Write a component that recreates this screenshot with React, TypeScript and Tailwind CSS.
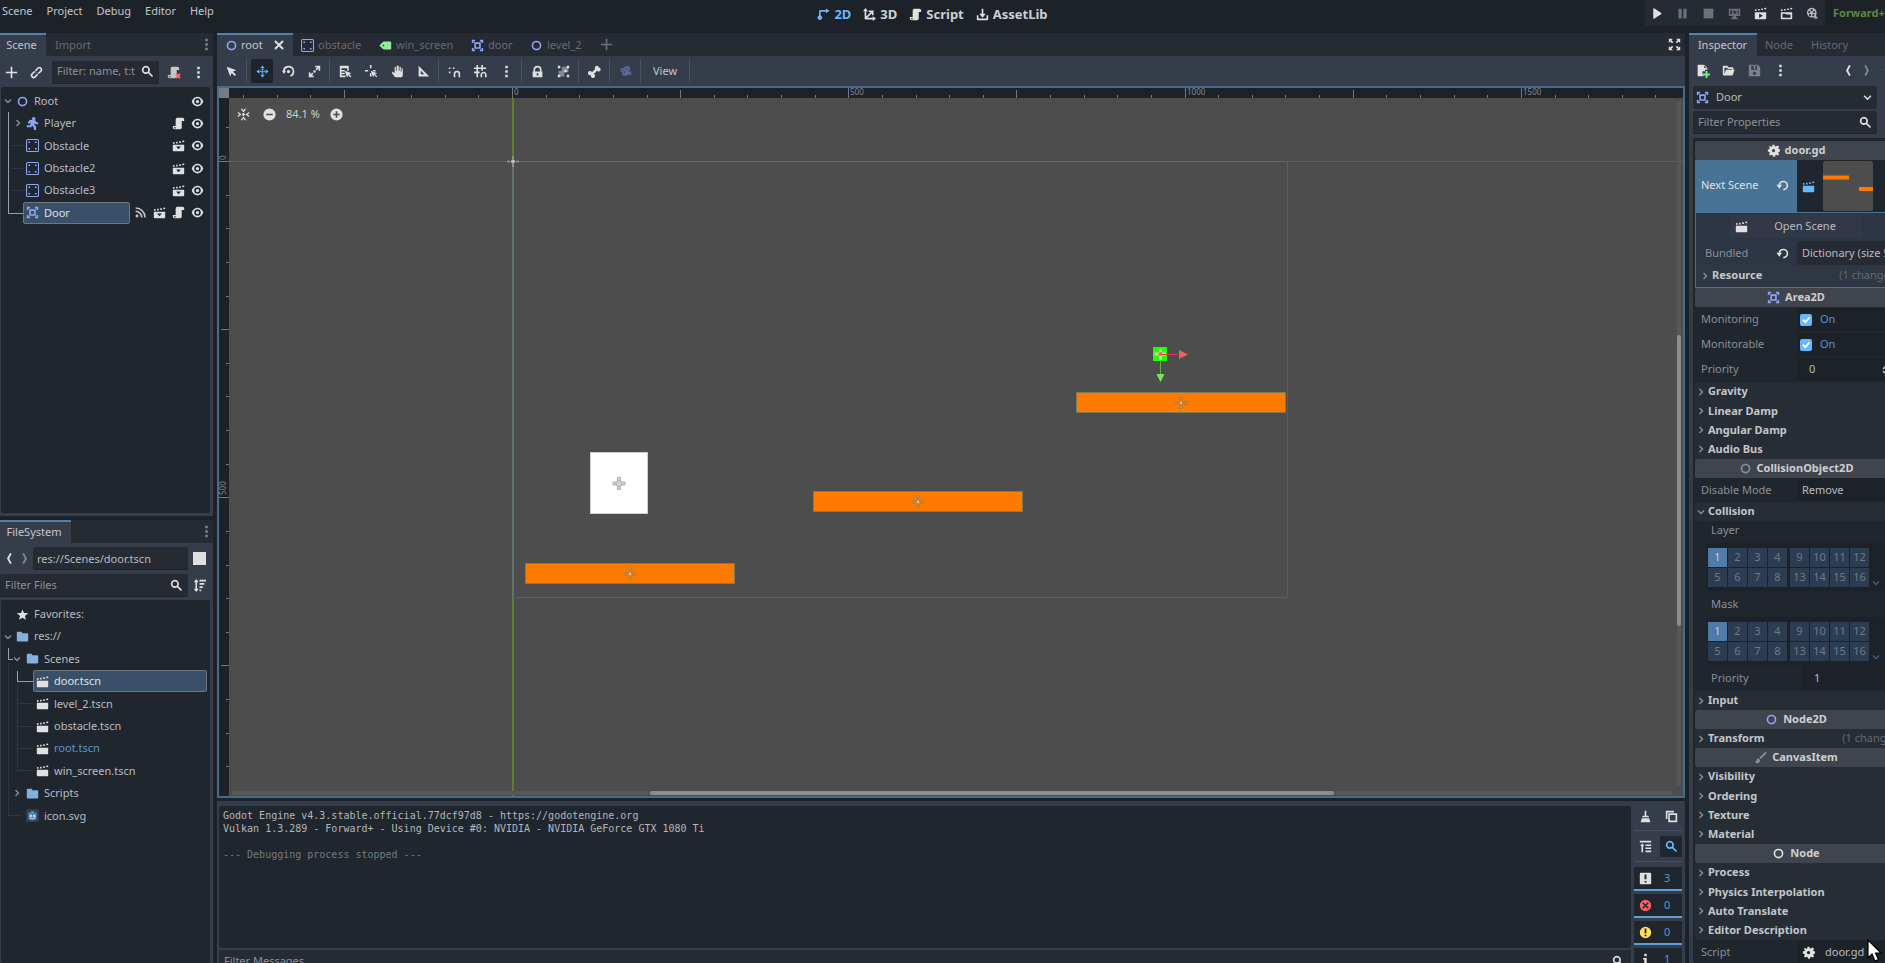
import React from "react";

/* ---------- icons (16-unit grid) ---------- */

const P = {
  node: "M8 2a6 6 0 0 0 0 12A6 6 0 0 0 8 2zm0 2a4 4 0 0 1 0 8 4 4 0 0 1 0-8z",
  area: "M1 1v4h2V3h2V1zm10 0v2h2v2h2V1zM4 4v8h8V4zm2 2h4v4H6zm-5 5v4h4v-2H3v-2zm12 0v2h-2v2h4v-4z",
  body: "M2 0a2 2 0 0 0-2 2v12a2 2 0 0 0 2 2h12a2 2 0 0 0 2-2V2a2 2 0 0 0-2-2zm0 1.3h12a.7.7 0 0 1 .7.7v12a.7.7 0 0 1-.7.7H2a.7.7 0 0 1-.7-.7V2a.7.7 0 0 1 .7-.7zM3 3v2h2V3zm8 0v2h2V3zM3 11v2h2v-2zm8 0v2h2v-2z",
  player:
    "M9.500 0a2.200 2.200 0 1 0 0 4.400 2.200 2.200 0 0 0 0-4.400zM4.500 3.500 2 7.500l2 1.200L5.800 6 5 10.200H1v2.400h5.500l1-1.800 2.200 2V16H12.400v-4.200L10.300 9.500l.4-2L11.500 9H15V6.600h-2l-1.300-2.300z",
  clap: "M1 7v7a1 1 0 0 0 1 1h12a1 1 0 0 0 1-1V7zM1 4l.3 1.800h2L3 3.700zm3.900-.6.3 2h2l-.4-2zm3.800-.6.4 2h2l-.4-2zm3.800-.7.4 2 2.100-.3V1.800z",
  clapInst:
    "M1 7v7a1 1 0 0 0 1 1h12a1 1 0 0 0 1-1V7zm4 2.200h6L8 12.500zM1 4l.3 1.800h2L3 3.700zm3.900-.6.3 2h2l-.4-2zm3.800-.6.4 2h2l-.4-2zm3.800-.7.4 2 2.100-.3V1.800z",
  clapPlay:
    "M1 6.500V14a1 1 0 0 0 1 1h12a1 1 0 0 0 1-1V6.500zM6.300 8l4.700 2.800-4.700 2.700zM1 3l.3 1.800h2L3 2.700zm3.900-.6.3 2h2l-.4-2zm3.800-.6.4 2h2l-.4-2zm3.800-.7.4 2 2.100-.3V.8z",
  clapFolder:
    "M1 6.500V14a1 1 0 0 0 1 1h12a1 1 0 0 0 1-1V6.500zm2 1.800h4l1 1h5v4H3zM1 3l.3 1.800h2L3 2.700zm3.900-.6.3 2h2l-.4-2zm3.800-.6.4 2h2l-.4-2zm3.800-.7.4 2 2.100-.3V.8z",
  script:
    "M6 1a3 3 0 0 0-1.500 2.500V11H1v2a2 2 0 0 0 2 2h7a2 2 0 0 0 2-2V5h3V3a2 2 0 0 0-2-2zM2.500 12.500h2V14H3z",
  eye: "M8 2C5.400 2 2.200 3.900 1 7.700a1 1 0 0 0 0 .6C2.200 12.200 5.500 14 8 14s5.800-1.800 7-5.700a1 1 0 0 0 0-.6C13.900 3.900 10.600 2 8 2zm0 2a4 4 0 0 1 0 8 4 4 0 0 1 0-8zm0 2a2 2 0 0 0 0 4 2 2 0 0 0 0-4z",
  folder: "M1 3a1 1 0 0 1 1-1h4.500a1 1 0 0 1 1 1v1H14a1 1 0 0 1 1 1v8a1 1 0 0 1-1 1H2a1 1 0 0 1-1-1z",
  star: "M8 1.700 6.200 6 1 6.300l4 3.400L3.700 14.500 8 12l4.300 2.500L11 9.700l4-3.400L9.800 6z",
  plus: "M7 1v6H1v2h6v6h2V9h6V7H9V1z",
  search: "M6 1a5 5 0 1 0 2.700 9.200l4.100 4.100a1 1 0 0 0 1.500-1.500L10.200 8.700A5 5 0 0 0 6 1zm0 2a3 3 0 1 1 0 6 3 3 0 0 1 0-6z",
  dots: "M6.500 1h3v3h-3zM6.500 6.500h3v3h-3zM6.500 12h3v3h-3z",
  select: "M2 2l4.500 12 1.600-4.300L12 13.600 13.600 12 9.700 8.100 14 6.500z",
  move: "M8 .5 5.200 4h5.600zM.5 8 4 10.800V5.200zM15.500 8 12 5.200v5.600zM8 15.500l2.800-3.500H5.200zM8 6.500a1.500 1.500 0 1 0 0 3 1.500 1.500 0 0 0 0-3zM7 4.500h2v1.500H7zm0 5.500h2v1.500H7zM4.500 7H6v2H4.500zM10 7h1.500v2H10z",
  rotate: "M8 1a7 7 0 0 0-6.900 6H0l2.500 4L5 7H3.200a5 5 0 1 1 6.800 5.600l.7 1.900A7 7 0 0 0 8 1zm0 5a2 2 0 1 0 0 4 2 2 0 0 0 0-4z",
  scale: "M9 1v2h2.600L9.300 5.300l1.400 1.400L13 4.400V7h2V1zM8 6.500A1.500 1.500 0 1 0 8 9.500 1.500 1.500 0 0 0 8 6.500zM1 9v6h6v-2H4.400l2.300-2.300-1.400-1.400L3 11.600V9z",
  list: "M1 1v14h7v-2H3v-1.500h4v-2H3V8h4V6H3V4h7v3h2V1zM7 7l3 8.500 1.200-3 2.600 2.700 1.400-1.400-2.700-2.600 3-1.200z",
  pivot: "M6 0h2v4H6zM0 6h4v2H0zM10 6h3v2h-3zM6 10h2v4H6zM7 7l3 8 1.200-2.800L14 15l1-1-2.800-2.800L15 10z",
  hand: "M7 1v6H6V2.500H4.500V10L2.300 8 1 9.500 5 15h8a2 2 0 0 0 1.500-2V4H13v4h-1V2h-1.500v5h-1V1z",
  ruler: "M2 1v13h13zm2.700 6 4.300 4.300H4.700z",
  smart: "M1 3h2v2H1zM1 8h2v2H1zM6 3h2v2H6zM7 15v-4a4 4 0 0 1 8 0v4h-2v-4a2 2 0 0 0-4 0v4z",
  grid: "M3 0v3H0v2h3v3H0v2h3v5h2v-5h2V8H5V5h4v2h2V5h4V3h-4V0H9v3H5V0zm5 15v-3.500a3.800 3.800 0 0 1 7.500 0V15h-2v-3.500a1.800 1.800 0 0 0-3.500 0V15z",
  lock: "M8 1a5 5 0 0 0-5 5v2H2v7h12V8h-1V6a5 5 0 0 0-5-5zm0 2a3 3 0 0 1 3 3v2H5V6a3 3 0 0 1 3-3zM7 10h2v3H7z",
  bone: "M11 1a2.500 2.500 0 0 0-2.200 3.800L4.900 8.800A2.600 2.600 0 1 0 3.700 12.300 2.600 2.600 0 1 0 7.200 11.100l4-3.900A2.500 2.500 0 1 0 13.400 3 2.500 2.500 0 0 0 11 1z",
  cam: "M9 1.500a3 3 0 0 0-3 2.700A2.700 2.700 0 1 0 4 9v3a1 1 0 0 0 1 1h5a1 1 0 0 0 1-1v-1l4 2V7.500L12 9a1 1 0 0 0-.3-1.500A3 3 0 0 0 9 1.500zM6 8h1.500v1.500H6zM8.500 4H10v1.500H8.500zM3 6h1.300v1.300H3z",
  expand: "M1 1v5l1.800-1.800L5 6.500 6.500 5 4.200 2.800 6 1zM10 1l1.800 1.800L9.500 5 11 6.500l2.200-2.300L15 6V1zM5 9.500l-2.200 2.300L1 10v5h5l-1.800-1.800L6.500 11zM11 9.500 9.500 11l2.300 2.200L10 15h5v-5l-1.800 1.800z",
  gear: "M6.800 1 6.300 3a5 5 0 0 0-1.100.5L3.400 2.400 2.400 3.400l1.100 1.800A5 5 0 0 0 3 6.300L1 6.800v2.400l2 .5a5 5 0 0 0 .5 1.100l-1.100 1.800 1.700 1.700 1.800-1.100a5 5 0 0 0 1 .5l.5 2h2.400l.5-2a5 5 0 0 0 1.100-.5l1.800 1.100 1.700-1.700-1.100-1.800a5 5 0 0 0 .5-1.100l2-.5V6.800l-2-.5a5 5 0 0 0-.5-1.100l1.100-1.800-1.700-1.700-1.800 1.100A5 5 0 0 0 9.700 3l-.5-2zM8 6a2 2 0 1 1 0 4 2 2 0 0 1 0-4z",
  reload: "M9 2A6 6 0 0 0 3.100 7H.5L4 12l3.500-5H5.100A4 4 0 1 1 9 12v2A6 6 0 0 0 9 2z",
  canvas: "M14.500 1a1.500 1.500 0 0 0-1 .4L6.800 8l1.700 1.700 6.600-6.700A1.500 1.500 0 0 0 14.500 1zM5.800 9A2.800 2.800 0 0 0 3 11.800C3 13 2 14 1 14.500c2.500 1 6.500.5 6.500-3z",
  play: "M4 2.500a1 1 0 0 1 1.500-.8l8 5.500a1 1 0 0 1 0 1.600l-8 5.500A1 1 0 0 1 4 13.500z",
  pause: "M3 2h4v12H3zM9 2h4v12H9z",
  stop: "M2 2h12v12H2z",
  remote: "M1 2v9h5v2H4v2h8v-2h-2v-2h5V2zm2 2h2v5H3zm4 0 4 2.500L7 9zm5 0h1v5h-1z",
  reel: "M7 1a6 6 0 1 0 3 11.300V14h4v-2h-1.500V9.500A6 6 0 0 0 7 1zm0 1.500A1.400 1.400 0 1 1 7 5.300 1.400 1.400 0 0 1 7 2.500zM4 5a1.300 1.300 0 1 1 0 2.600A1.300 1.300 0 0 1 4 5zm6 0a1.300 1.300 0 1 1 0 2.600A1.300 1.300 0 0 1 10 5zM5 8.700a1.300 1.300 0 1 1 0 2.600 1.300 1.300 0 0 1 0-2.600zm4 0a1.300 1.300 0 1 1 0 2.600 1.300 1.300 0 0 1 0-2.600z",
  d2: "M11 .5v2H4a1.500 1.500 0 0 0-1.500 1.500v5.300a2.800 2.800 0 1 0 2 0V4.500H11v2l4.500-3z",
  d3: "M3 0 0 4h2v9a1 1 0 0 0 1 1h9v2l4-3-4-3v2H5.400L11 6.400V9h2V3H7v2h2.600L4 10.600V4h2z",
  asset: "M7 1v6H4l4 5 4-5H9V1zM1 9v5a1 1 0 0 0 1 1h12a1 1 0 0 0 1-1V9h-2v4H3V9z",
  tag: "M6 3a1 1 0 0 0-.7.300L1 7.500a.8.800 0 0 0 0 1.100l4.300 4.100A1 1 0 0 0 6 13h8a1 1 0 0 0 1-1V4a1 1 0 0 0-1-1zM5.500 7a1 1 0 1 1 0 2 1 1 0 0 1 0-2z",
  openFolder: "M2 2a1 1 0 0 0-1 1v10a1 1 0 0 0 1 1h11l2.500-7H14V5a1 1 0 0 0-1-1H8L6.500 2zm1 2.500h3L7.500 6H12v1H5L3 12z",
  save: "M1 1v14h14V4l-3-3zm3 1h3v4h2V2h2v5H4zm4 7.500a2 2 0 1 1 0 4 2 2 0 0 1 0-4z",
  newFile: "M2 1v14h7v-2h-1v-4h3V7h3V6L9 1zm8 0v4h4z",
  broom: "M7 1v6H5a1 1 0 0 0-1 1v1h8V8a1 1 0 0 0-1-1H9V1zM3.500 10 2 15h12l-1.500-5z",
  copy: "M1 1v10h2V3h8V1zM4 4v11h11V4zm2 2h7v7H6z",
  collapse: "M1 1h14v2H1zM4 4 1.500 7.500H3V15h2V7.500h1.500zM8 5.500h7v1.800H8zM8 9.300h7v1.800H8zM8 13h7v2H8z",
  alert: "M2 1a1 1 0 0 0-1 1v12a1 1 0 0 0 1 1h12a1 1 0 0 0 1-1V2a1 1 0 0 0-1-1zm4.800 2h2.400v6H6.800zm0 8h2.400v2H6.800z",
  err: "M8 1a7 7 0 1 0 0 14A7 7 0 0 0 8 1zM5.200 4 8 6.800 10.800 4 12 5.200 9.200 8l2.800 2.800-1.200 1.200L8 9.200 5.200 12 4 10.800 6.800 8 4 5.200z",
  warn: "M8 1a7 7 0 1 0 0 14A7 7 0 0 0 8 1zM6.900 3h2.200v6H6.900zm0 7.500h2.200v2.200H6.900z",
  info: "M6.500 1h3v3h-3zM5 6h4.500v7H11v2H5v-2h1.500V8H5z",
  sort: "M4 0 1 4h2v8H1l3 4 3-4H5V4h2zM8 1h8v2H8zM8 5h6v2H8zM8 9h4v2H8zM8 13h2v2H8z",
  center:
    "M8 6.300a1.700 1.700 0 1 0 0 3.400 1.700 1.700 0 0 0 0-3.400zM4.500 1h2L8 3l1.500-2h2L8 5.500zM4.500 15h2L8 13l1.500 2h2L8 10.500zM1 4.500v2L3 8 1 9.500v2L5.500 8zM15 4.500v2L13 8l2 1.500v2L10.500 8z",
  minusC: "M8 .5a7.500 7.500 0 1 0 0 15 7.500 7.500 0 0 0 0-15zM4 7h8v2H4z",
  plusC: "M8 .5a7.500 7.500 0 1 0 0 15 7.500 7.500 0 0 0 0-15zM7 4h2v3h3v2H9v3H7V9H4V7h3z",
  link: "M11.500 1a3.500 3.500 0 0 0-2.500 1L7 4a3.500 3.500 0 0 0-.9 3.300l1.900-.8a1.500 1.500 0 0 1 .4-1.100l2-2a1.500 1.500 0 0 1 2.200 2.200l-2 2a1.500 1.500 0 0 1-1.100.4l-.8 1.900A3.500 3.500 0 0 0 12 9l2-2A3.500 3.500 0 0 0 11.500 1zM4 7 2 9a3.500 3.500 0 1 0 5 5l2-2a3.500 3.500 0 0 0 .9-3.300L8 9.500a1.500 1.500 0 0 1-.4 1.100l-2 2a1.500 1.500 0 0 1-2.200-2.200l2-2A1.500 1.500 0 0 1 6.500 8l.8-1.900A3.500 3.500 0 0 0 4 7z",
  signal: "M2 1.500v2A10.500 10.500 0 0 1 12.500 14h2A12.500 12.500 0 0 0 2 1.500zm0 4v2A6.500 6.500 0 0 1 8.500 14h2A8.500 8.500 0 0 0 2 5.500zM3.700 10.500a1.700 1.700 0 1 0 0 3.500 1.700 1.700 0 0 0 0-3.500z",
  check: "M3 8.500l1.800-1.800L7 8.900l4.700-5.200L13.500 5.300 7 12.500z",
};

type IconName = keyof typeof P;

function Icon({ n, c = "text-[#e0e0e0]", s = "size-[13px]" }: { n: IconName; c?: string; s?: string }) {
  return (
    <svg viewBox="0 0 16 16" className={`${s} ${c} shrink-0`} fill="currentColor" fillRule="evenodd" aria-hidden="true">
      <path d={P[n]} />
    </svg>
  );
}

function Chevron({ dir, c = "text-[#8b8f95]", s = "size-2" }: { dir: "down" | "right" | "left"; c?: string; s?: string }) {
  const d = dir === "down" ? "M1 2.500 4 5.500 7 2.500" : dir === "right" ? "M2.500 1 5.500 4 2.500 7" : "M5.500 1 2.500 4 5.500 7";
  return (
    <svg viewBox="0 0 8 8" className={`${s} ${c} shrink-0`} fill="none" stroke="currentColor" strokeWidth="1.400" aria-hidden="true">
      <path d={d} />
    </svg>
  );
}

function Nav({ dir, c }: { dir: "left" | "right"; c: string }) {
  return (
    <svg viewBox="0 0 8 14" className={`h-[13px] w-2 shrink-0 ${c}`} fill="none" stroke="currentColor" strokeWidth="2" aria-hidden="true">
      <path d={dir === "left" ? "M6 1.500 3 7l3 5.500" : "M2 1.500 5 7l-3 5.500"} />
    </svg>
  );
}

function Tool({ n, label, active, c }: { n: IconName; label: string; active?: boolean; c?: string }) {
  return (
    <button
      aria-label={label}
      className={`flex h-6 w-[22px] shrink-0 items-center justify-center rounded-xs ${active ? "bg-[#1f242c]" : ""}`}
    >
      <Icon n={n} c={active ? "text-[#69b7ff]" : c} />
    </button>
  );
}

const Sep = () => <div className="h-6 w-px shrink-0 bg-[#4a505c]" />;

/* ---------- top bar ---------- */

function TopBar() {
  return (
    <header className="flex h-[33px] shrink-0 items-start justify-between">
      <nav className="flex w-[560px] gap-[14px] pt-[2px] pl-[2px] leading-[18px] text-[#c3c6ca]">
        {["Scene", "Project", "Debug", "Editor", "Help"].map((m) => (
          <button key={m}>{m}</button>
        ))}
      </nav>
      <div className="flex gap-3 pt-1 text-[13px] leading-5 font-bold text-[#cdcfd2]">
        <button className="flex items-center gap-1 text-[#69b7ff]">
          <Icon n="d2" c="text-[#69b7ff]" />
          2D
        </button>
        <button className="flex items-center gap-1">
          <Icon n="d3" />
          3D
        </button>
        <button className="flex items-center gap-1">
          <Icon n="script" />
          Script
        </button>
        <button className="flex items-center gap-1">
          <Icon n="asset" />
          AssetLib
        </button>
      </div>
      <div className="flex w-[580px] justify-end">
        <div className="-mr-[8px] flex shrink-0 justify-end gap-2">
          <div className="flex h-[26px] items-center gap-1 rounded-b-xs bg-[#262a33] px-px">
            <Tool n="play" label="Run project" />
            <Tool n="pause" label="Pause" c="text-[#6d7075]" />
            <Tool n="stop" label="Stop" c="text-[#6d7075]" />
            <Tool n="remote" label="Remote debug" c="text-[#6d7075]" />
            <Tool n="clapPlay" label="Run current scene" />
            <Tool n="clapFolder" label="Run specific scene" />
            <Tool n="reel" label="Movie maker" c="text-[#b4b6b9]" />
          </div>
          <button className="h-[26px] w-[60px] text-left leading-[26px] font-bold text-[#5b8a3c]">Forward+</button>
        </div>
      </div>
    </header>
  );
}

/* ---------- docks ---------- */

function DockTab({ children, active, className = "" }: { children: React.ReactNode; active?: boolean; className?: string }) {
  return (
    <button
      className={`flex h-[23px] shrink-0 items-center border-t-2 pb-px ${
        active ? "border-[#4f83ae] bg-[#363d4a] text-[#c3c6ca]" : "border-transparent text-[#676b73]"
      } ${className}`}
    >
      {children}
    </button>
  );
}

function Field({ label, className = "" }: { label: string; className?: string }) {
  return (
    <label className={`flex h-[23px] min-w-0 flex-1 items-center rounded-xs border-b border-[#1d2229] bg-[#262a33] px-[5px] ${className}`}>
      <input
        aria-label={label}
        placeholder={label}
        className="min-w-0 flex-1 bg-transparent text-[#c3c6ca] outline-none placeholder:text-[#8d9198]"
      />
      <Icon n="search" />
    </label>
  );
}

const sceneRows: { name: string; icon: IconName; tools: IconName[] }[] = [
  { name: "Player", icon: "player", tools: ["script", "eye"] },
  { name: "Obstacle", icon: "body", tools: ["clapInst", "eye"] },
  { name: "Obstacle2", icon: "body", tools: ["clapInst", "eye"] },
  { name: "Obstacle3", icon: "body", tools: ["clapInst", "eye"] },
];

function SceneDock() {
  return (
    <section className="flex min-h-0 flex-1 flex-col bg-[#363d4a]">
      <div className="flex h-[23px] shrink-0 items-center bg-[#262a33]">
        <DockTab active className="w-[46px] justify-center pr-[3px]">Scene</DockTab>
        <DockTab className="pl-[9px]">Import</DockTab>
        <button aria-label="Dock options" className="ml-auto">
          <Icon n="dots" c="text-[#85888e]" />
        </button>
      </div>
      <div className="flex h-[31px] shrink-0 items-center gap-[3px] pt-px pr-1">
        <Tool n="plus" label="Add node" />
        <Tool n="link" label="Instantiate scene" />
        <Field label="Filter: name, t:t" className="ml-[2px]" />
        <button aria-label="Detach script" className="relative flex h-6 w-[22px] items-center justify-center">
          <Icon n="script" c="text-[#c4c6c8]" />
          <svg viewBox="0 0 6 6" className="absolute right-[3px] bottom-[5px] size-[6px] text-[#ff6a6a]" stroke="currentColor" strokeWidth="2">
            <path d="M1 1l4 4M5 1 1 5" />
          </svg>
        </button>
        <Tool n="dots" label="More options" />
      </div>
      <div className="mr-[3px] mb-[3px] ml-px min-h-0 flex-1 rounded-xs bg-[#20262e] pt-[3px]">
        <ul className="relative grid h-[134px] auto-rows-fr text-[#b9bcc1]">
          <li className="flex items-center pr-[6px] pl-[3px]">
            <Chevron dir="down" />
            <span className="ml-1 flex flex-1 items-center gap-[5px]">
              <Icon n="node" c="text-[#8da5f3]" />
              Root
            </span>
            <Icon n="eye" />
          </li>
          {sceneRows.map((r, i) => (
            <li key={r.name} className="flex items-center pr-[6px]">
              <span className="flex w-[25px] justify-end">
                {i === 0 ? <Chevron dir="right" s="mr-[4px] size-2" /> : <span className="mr-[3px] h-px w-3 bg-[#31363e]" />}
              </span>
              <span className="flex flex-1 items-center gap-[5px]">
                <Icon n={r.icon} c="text-[#8da5f3]" />
                {r.name}
              </span>
              <span className="flex gap-[6px]">
                {r.tools.map((t) => (
                  <Icon key={t} n={t} />
                ))}
              </span>
            </li>
          ))}
          <li className="flex items-center pr-[6px]">
            <span className="ml-[22px] flex h-[22px] flex-1 items-center gap-[5px] rounded-xs border border-[#70767f] bg-[#3a5068] pl-[2px] text-[#e0e2e4]">
              <Icon n="area" c="text-[#8da5f3]" />
              Door
            </span>
            <span className="flex gap-[6px] pl-1">
              <Icon n="signal" c="text-[#c4c6c8]" />
              <Icon n="clapInst" />
              <Icon n="script" />
              <Icon n="eye" />
            </span>
          </li>
          <li aria-hidden="true" className="absolute top-[22px] left-[7px] h-[102px] w-[15px] border-b border-l border-[#9b9ea2]" />
        </ul>
      </div>
    </section>
  );
}

const scenes = ["door.tscn", "level_2.tscn", "obstacle.tscn", "root.tscn", "win_screen.tscn"];

function FileDock() {
  return (
    <section className="flex h-[443px] shrink-0 flex-col bg-[#363d4a]">
      <div className="flex h-[23px] shrink-0 items-center bg-[#262a33]">
        <DockTab active className="w-[71px] justify-center pr-[3px]">FileSystem</DockTab>
        <button aria-label="Dock options" className="ml-auto">
          <Icon n="dots" c="text-[#85888e]" />
        </button>
      </div>
      <div className="mt-[3px] flex h-[25px] shrink-0 items-center pr-[3px]">
        <button aria-label="Back" className="flex w-[17px] justify-center">
          <Nav dir="left" c="text-[#e0e0e0]" />
        </button>
        <button aria-label="Forward" className="flex w-4 justify-center">
          <Nav dir="right" c="text-[#85898f]" />
        </button>
        <input
          aria-label="Current path"
          defaultValue="res://Scenes/door.tscn"
          className="h-[23px] w-[155px] rounded-xs border-b border-[#1d2229] bg-[#262a33] px-[4px] text-[#b9bcc1] outline-none"
        />
        <button aria-label="Split mode" className="mx-auto size-[13px] bg-[#e0e0e0]" />
      </div>
      <div className="mt-[3px] flex h-[23px] shrink-0 pr-[3px]">
        <Field label="Filter Files" className="max-w-[188px]" />
        <button aria-label="Sort files" className="mx-auto">
          <Icon n="sort" />
        </button>
      </div>
      <div className="mt-[3px] mr-[3px] ml-px flex-1 rounded-xs bg-[#20262e] pt-[3px]">
        <ul className="relative grid h-[224px] auto-rows-fr text-[#b9bcc1]">
          <li className="flex items-center gap-[5px] pl-[15px]">
            <Icon n="star" />
            Favorites:
          </li>
          <li className="flex items-center gap-[5px] pl-[3px]">
            <Chevron dir="down" />
            <Icon n="folder" c="-ml-px text-[#84b1dc]" />
            res://
          </li>
          <li className="flex items-center gap-[5px] pl-3">
            <Chevron dir="down" />
            <Icon n="folder" c="text-[#84b1dc]" />
            Scenes
          </li>
          {scenes.map((s) => (
            <li key={s} className="flex items-center pr-[3px]">
              <span className={`ml-4 h-px w-4 ${s === "door.tscn" ? "bg-[#9b9ea2]" : "bg-[#31363e]"}`} />
              <span
                className={`flex h-[22px] flex-1 items-center gap-[5px] rounded-xs border pl-[2px] ${
                  s === "door.tscn" ? "border-[#70767f] bg-[#3a5068] text-[#e0e2e4]" : "border-transparent"
                } ${s === "root.tscn" ? "text-[#5697ce]" : ""}`}
              >
                <Icon n="clap" />
                {s}
              </span>
            </li>
          ))}
          <li className="flex items-center gap-[5px] pl-3">
            <Chevron dir="right" />
            <Icon n="folder" c="text-[#84b1dc]" />
            Scripts
          </li>
          <li className="flex items-center gap-[5px] pl-[25px]">
            <svg viewBox="0 0 16 16" className="size-[13px]" aria-hidden="true">
              <rect width="16" height="16" rx="2" fill="#363d52" />
              <path d="M3 5l1.500-1 1 1L6.500 2.500h3L10.500 5l1-1L13 5v6c0 2-2 3-5 3s-5-1-5-3z" fill="#478cbf" />
              <circle cx="5.800" cy="8.500" r="1.500" fill="#d7e3ee" />
              <circle cx="10.200" cy="8.500" r="1.500" fill="#d7e3ee" />
              <path d="M4 11.500h8" stroke="#d7e3ee" strokeWidth=".8" />
            </svg>
            icon.svg
          </li>
          <li aria-hidden="true" className="absolute top-[45px] left-[7px] h-[12px] w-[5px] border-b border-l border-[#9b9ea2]" />
          <li aria-hidden="true" className="absolute top-[60px] left-[7px] h-[153px] w-[14px] border-b border-l border-[#31363e]" />
          <li aria-hidden="true" className="absolute top-[79px] left-4 h-[90px] w-px bg-[#31363e]" />
          <li aria-hidden="true" className="absolute top-[68px] left-4 h-[11px] w-px bg-[#9b9ea2]" />
        </ul>
      </div>
    </section>
  );
}

/* ---------- 2D viewport ---------- */

const OX = 295;
const OY = 75;
const STEP = 33.63;

function Cross({ x, y, line, fill }: { x: number; y: number; line: string; fill: string }) {
  return (
    <g stroke={line} fill={fill} strokeWidth="1">
      <path d={`M${x - 1.5} ${y - 6}h3v12h-3z`} />
      <path d={`M${x - 6} ${y - 1.5}h12v3h-12z`} />
      <circle cx={x} cy={y} r="3" />
    </g>
  );
}

function Canvas() {
  const xs = Array.from({ length: 43 }, (_, i) => i - 8);
  const ys = Array.from({ length: 21 }, (_, i) => i - 1);
  return (
    <div className="relative min-h-0 flex-1 overflow-hidden border-2 border-[#446c8f] bg-[#4d4d4d]">
      <svg className="absolute -top-[2px] -left-[2px] h-[712px] w-[3000px]" aria-label="2D viewport">
        <rect x={OX} y="12" width="2" height="720" fill="#5f7d2f" />
        <rect x={OX} y={OY} width="2" height="436" fill="#5f7266" />
        <rect x="12" y={OY} width="2988" height="1" fill="#b03c4c" />
        <rect x={OX + 1} y={OY} width="774" height="1" fill="#8f4a80" />
        <path d={`M${OX + 1} 511.500H1070.500V75`} stroke="#54588d" fill="none" />
        <path d={`M${OX + 1} 70v3M${OX + 1} 78v3M290 75.500h3M299 75.500h3`} stroke="#9a9a9a" strokeWidth="1.500" />
        <circle cx={OX + 1} cy={OY + 0.5} r="2" fill="#bdbdbd" />

        {[
          [308, 477],
          [596, 405],
          [859, 306],
        ].map(([x, y]) => (
          <g key={x}>
            <rect x={x + 0.5} y={y + 0.5} width="209" height="20" fill="#ff7b00" stroke="#7d7b52" />
            <g stroke="#b57a3a" strokeWidth="1" fill="#e58b30">
              <path d={`M${x + 103.5} ${y + 5}h3v2.500h-3zM${x + 103.5} ${y + 14}h3v2.500h-3zM${x + 99} ${y + 9.5}h2.500v3h-2.500zM${x + 108} ${y + 9.5}h2.500v3h-2.500z`} />
              <circle cx={x + 105} cy={y + 11} r="2" fill="#f0b878" />
            </g>
          </g>
        ))}
        <rect x="373.500" y="366.500" width="57" height="61" fill="#ffffff" stroke="#cccccc" />
        <Cross x={402} y={397.5} line="#b0b0b0" fill="#d4d4d4" />

        <rect x="936" y="261" width="14" height="14" fill="#22ff00" />
        <path d="M937.500 268h11M943.500 263v11" stroke="#d9d7a8" strokeWidth="3" />
        <circle cx="943.500" cy="268" r="2" fill="#f0625e" />
        <path d="M944 268.500h17" stroke="#e03a50" />
        <path d="M962 264l9 4.500-9 4.500z" fill="#f0625e" />
        <path d="M943.500 275v14" stroke="#5fae3a" />
        <path d="M939.500 288h8l-4 8z" fill="#7fe35a" />

        <rect x="2" y="2" width="3000" height="10" fill="#1d2229" />
        <rect x="2" y="2" width="10" height="720" fill="#1d2229" />
        {xs.map((i) => {
          const h = i % 10 === 0 ? 11 : i % 5 === 0 ? 8 : 3;
          return <rect key={i} x={Math.round(OX + i * STEP)} y={12 - h} width="1" height={h} fill="#75797f" />;
        })}
        {ys.map((i) => {
          const h = i % 10 === 0 ? 11 : i % 5 === 0 ? 8 : 3;
          return <rect key={i} y={Math.round(OY + i * STEP)} x={12 - h} height="1" width={h} fill="#75797f" />;
        })}
        <g fill="#85898f" fontSize="8">
          {[0, 500, 1000, 1500].map((v) => (
            <text key={v} x={Math.round(OX + (v / 50) * STEP) + 2} y="9">
              {v}
            </text>
          ))}
          <text transform={`translate(9 ${OY - 1}) rotate(-90)`}>0</text>
          <text transform={`translate(9 ${OY + 334}) rotate(-90)`}>500</text>
        </g>
        <rect x="0" y="0" width="12" height="12" fill="#777b83" />
      </svg>

      <div className="absolute top-[18px] left-[18px] flex items-center text-[#d0d0d0]">
        <button aria-label="Center view"><Icon n="center" /></button>
        <button aria-label="Zoom out" className="ml-[13px]"><Icon n="minusC" /></button>
        <button className="w-[54px] text-center">84.1 %</button>
        <button aria-label="Zoom in"><Icon n="plusC" /></button>
      </div>

      <div className="absolute top-[13px] right-[2px] bottom-[10px] w-1 bg-[#555855]">
        <div className="mt-[234px] h-[291px] rounded-full bg-[#8e8e8e]" />
      </div>
      <div className="absolute right-[11px] bottom-px left-[13px] h-1 bg-[#555855]">
        <div className="ml-[418px] h-1 w-[684px] rounded-full bg-[#8e8e8e]" />
      </div>
    </div>
  );
}

function SceneTab({ n, c, children, w }: { n: IconName; c: string; children: string; w: string }) {
  return (
    <button className={`flex h-[23px] shrink-0 items-center gap-1 border-t-2 border-transparent pb-px text-[#676b73] ${w}`}>
      <Icon n={n} c={c} />
      {children}
    </button>
  );
}

function CenterArea() {
  return (
    <main className="flex min-w-0 flex-1 flex-col">
      <div className="flex h-[23px] shrink-0 items-center bg-[#262a33]">
        <div className="flex h-[23px] w-[76px] shrink-0 items-center border-t-2 border-[#4f83ae] bg-[#363d4a] pb-px pl-[8px] text-[#c3c6ca]">
          <Icon n="node" c="text-[#8da5f3]" />
          <button className="ml-[3px] w-[32px] text-left">root</button>
          <button aria-label="Close tab">
            <svg viewBox="0 0 12 12" className="size-[12px] text-[#e0e0e0]" stroke="currentColor" strokeWidth="2">
              <path d="M2 2l8 8M10 2l-8 8" />
            </svg>
          </button>
        </div>
        <SceneTab n="body" c="text-[#8da5f3]" w="w-[77px] pl-[8px]">obstacle</SceneTab>
        <SceneTab n="tag" c="text-[#8eef97]" w="w-[93px] pl-[9px]">win_screen</SceneTab>
        <SceneTab n="area" c="text-[#8da5f3]" w="w-[59px] pl-[8px]">door</SceneTab>
        <SceneTab n="node" c="text-[#8da5f3]" w="w-[70px] pl-[8px]">level_2</SceneTab>
        <button aria-label="New scene" className="ml-[8px]">
          <Icon n="plus" c="text-[#6b6f75]" />
        </button>
        <button aria-label="Distraction free mode" className="mr-1 ml-auto">
          <Icon n="expand" />
        </button>
      </div>
      <div className="flex h-[30px] shrink-0 items-center gap-1 bg-[#363d4a] pl-[3px]">
        <Tool n="select" label="Select mode" />
        <Sep />
        <Tool n="move" label="Move mode" active />
        <Tool n="rotate" label="Rotate mode" />
        <Tool n="scale" label="Scale mode" />
        <Sep />
        <Tool n="list" label="List selectable nodes" />
        <Tool n="pivot" label="Change pivot" />
        <Tool n="hand" label="Pan mode" />
        <Tool n="ruler" label="Ruler mode" />
        <Sep />
        <Tool n="smart" label="Smart snap" />
        <Tool n="grid" label="Grid snap" />
        <Tool n="dots" label="Snapping options" />
        <Sep />
        <Tool n="lock" label="Lock" />
        <button aria-label="Group" className="flex h-6 w-[22px] items-center justify-center">
          <svg viewBox="0 0 16 16" className="size-[13px]" aria-hidden="true">
            <path d="M6 2h8v7H9v5H2V7h4z" fill="#85888e" />
            <path d="M1 1h3v3H1zM12 1h3v3h-3zM1 12h3v3H1zM12 12h3v3h-3zM9 6h3v3H9z" fill="#e0e0e0" />
          </svg>
        </button>
        <Sep />
        <Tool n="bone" label="Skeleton options" />
        <Sep />
        <Tool n="cam" label="Camera override" c="text-[#56689f]" />
        <Sep />
        <button className="w-10 text-center text-[#c3c6ca]">View</button>
        <Sep />
      </div>
      <Canvas />
      <Output />
    </main>
  );
}

function Counter({ n, c, v }: { n: IconName; c?: string; v: number }) {
  return (
    <button className="flex h-6 items-center gap-3 border-b-2 border-[#5d9edb] bg-[#20262e] pl-[5px] text-[#5697ce]">
      <Icon n={n} c={c} />
      {v}
    </button>
  );
}

function Output() {
  return (
    <section className="mt-[3px] flex h-[162px] shrink-0 bg-[#363d4a] pt-[5px]">
      <div className="ml-[2px] flex min-w-0 flex-1 flex-col">
        <pre className="h-[142px] shrink-0 rounded-xs bg-[#20262e] px-1 pt-[3px] font-['DejaVu_Sans_Mono',monospace] text-[10px] leading-[13px] text-[#b4b7bb]">
          {"Godot Engine v4.3.stable.official.77dcf97d8 - https://godotengine.org\nVulkan 1.3.289 - Forward+ - Using Device #0: NVIDIA - NVIDIA GeForce GTX 1080 Ti\n\n"}
          <span className="text-[#75797f]">--- Debugging process stopped ---</span>
        </pre>
        <label className="mt-[2px] flex h-[23px] shrink-0 items-center rounded-xs bg-[#262a33] pr-[6px] pl-[5px]">
          <input
            aria-label="Filter Messages"
            placeholder="Filter Messages"
            className="min-w-0 flex-1 bg-transparent outline-none placeholder:text-[#8d9198]"
          />
          <Icon n="search" />
        </label>
      </div>
      <div className="mr-[3px] ml-[3px] flex w-12 shrink-0 flex-col">
        <div className="flex h-[25px] shrink-0 items-center justify-between border-b border-[#4a505c] pb-1">
          <Tool n="broom" label="Clear output" />
          <Tool n="copy" label="Copy selection" />
        </div>
        <div className="mb-[5px] flex h-[31px] shrink-0 items-center justify-between border-b border-[#4a505c]">
          <Tool n="collapse" label="Collapse duplicates" />
          <button aria-label="Toggle search" className="flex h-[21px] w-[22px] items-center justify-center rounded-xs bg-[#20262e]">
            <Icon n="search" c="text-[#69b7ff]" />
          </button>
        </div>
        <div className="flex flex-col gap-[3px]">
          <Counter n="alert" v={3} />
          <Counter n="err" c="text-[#ff5f5f]" v={0} />
          <Counter n="warn" c="text-[#ffdd65]" v={0} />
          <Counter n="info" v={1} />
        </div>
      </div>
    </section>
  );
}

/* ---------- inspector ---------- */

function Category({ n, c, children }: { n: IconName; c?: string; children: string }) {
  return (
    <h3 className="flex h-[19px] shrink-0 items-center justify-center gap-[5px] rounded-xs bg-[#40444d] pr-[2px] font-bold text-[#cdcfd2]">
      <Icon n={n} c={c} />
      {children}
    </h3>
  );
}

function Fold({ children, open, note }: { children: string; open?: boolean; note?: string }) {
  return (
    <button className="flex h-full min-h-[19px] w-full items-center gap-[3px] bg-[#272d35] pl-[2px] text-left font-bold text-[#c3c6ca]">
      <Chevron dir={open ? "down" : "right"} />
      {children}
      {note && <span className="mr-[3px] ml-auto font-normal whitespace-nowrap text-[#64686f]">{note}</span>}
    </button>
  );
}

function Row({ label, children, indent }: { label: string; children: React.ReactNode; indent?: boolean }) {
  return (
    <div className="flex min-h-0 items-stretch">
      <span className={`flex shrink-0 items-center text-[#8b8f95] ${indent ? "w-[107px] pl-4" : "w-[102px] pl-[6px]"}`}>{label}</span>
      <div className="my-px flex flex-1 items-center rounded-xs bg-[#1d2229] text-[#b9bcc1]">{children}</div>
    </div>
  );
}

function Toggle({ label }: { label: string }) {
  return (
    <label className="flex items-center gap-[8px] pl-[3px] text-[#5697ce]">
      <span className="relative flex size-3">
        <input type="checkbox" defaultChecked aria-label={label} className="size-3 appearance-none rounded-xs bg-[#69b7ff]" />
        <span className="pointer-events-none absolute inset-0 flex">
          <Icon n="check" c="text-white" s="size-3" />
        </span>
      </span>
      On
    </label>
  );
}

function Layers({ label }: { label: string }) {
  const block = (nums: number[]) => (
    <div className="grid grid-cols-4 gap-px">
      {nums.map((v) => (
        <button
          key={v}
          aria-label={`${label} ${v}`}
          className={`flex h-[19px] w-[19px] items-center justify-center ${v === 1 ? "bg-[#4f7ba6] text-[#c5d0dc]" : "bg-[#2c3d51] text-[#6d7a88]"}`}
        >
          {v}
        </button>
      ))}
    </div>
  );
  return (
    <div className="shrink-0">
      <h4 className="pl-4 leading-[18px] text-[#8b8f95]">{label}</h4>
      <div className="mt-1 ml-3 flex items-end rounded-xs bg-[#1d2229] pt-[5px] pb-1">
        <div className="flex gap-[3px] pl-px">
          {block([1, 2, 3, 4, 5, 6, 7, 8])}
          {block([9, 10, 11, 12, 13, 14, 15, 16])}
        </div>
        <Chevron dir="down" c="ml-[3px] text-[#3f5f80]" />
      </div>
    </div>
  );
}

function Inspector() {
  return (
    <aside className="-mr-[21px] flex w-[217px] shrink-0 flex-col bg-[#363d4a]">
      <div className="flex h-[23px] shrink-0 bg-[#262a33]">
        <DockTab active className="w-[68px] justify-center pr-px">Inspector</DockTab>
        <DockTab className="pl-[8px]">Node</DockTab>
        <DockTab className="pl-[18px]">History</DockTab>
      </div>
      <div className="flex h-[29px] shrink-0 items-center gap-1 pl-[2px]">
        <button aria-label="New resource" className="relative flex h-6 w-[22px] items-center justify-center">
          <Icon n="newFile" />
          <svg viewBox="0 0 7 7" className="absolute right-[3px] bottom-[5px] size-[7px] text-[#5fff6a]" stroke="currentColor" strokeWidth="2">
            <path d="M3.500 0v7M0 3.500h7" />
          </svg>
        </button>
        <Tool n="openFolder" label="Open resource" />
        <Tool n="save" label="Save resource" c="text-[#7d8189]" />
        <Tool n="dots" label="Resource options" />
        <span className="flex w-[78px] items-center justify-end gap-[11px] pr-[2px]">
          <button aria-label="Previous object" className="flex"><Nav dir="left" c="text-[#e0e0e0]" /></button>
          <button aria-label="Next object" className="flex"><Nav dir="right" c="text-[#85898f]" /></button>
        </span>
        <button aria-label="Object history" className="flex pl-[7px]"><Icon n="reload" c="text-[#85898f]" /></button>
      </div>
      <div className="flex h-6 shrink-0 items-center pl-1">
        <button className="flex h-[23px] w-[184px] items-center gap-[7px] rounded-xs bg-[#262a33] pr-[5px] pl-[3px] text-left text-[#b9bcc1]">
          <Icon n="area" c="text-[#8da5f3]" />
          <span className="flex-1">Door</span>
          <Chevron dir="down" c="text-[#e0e0e0]" s="size-[9px]" />
        </button>
        <button aria-label="Open documentation" className="flex pl-[7px]"><Icon n="newFile" /></button>
      </div>
      <div className="mt-[2px] flex h-[23px] shrink-0 pl-1">
        <Field label="Filter Properties" className="max-w-[184px]" />
      </div>
      <div className="mt-1 mr-[3px] ml-1 min-h-0 flex-1 overflow-hidden rounded-xs bg-[#20262e] pt-[3px] pr-[4px] pl-[2px]">
        <Category n="gear">door.gd</Category>
        <div className="flex h-[52px]">
          <span className="flex w-[102px] shrink-0 items-center justify-between bg-[#467396] pr-[8px] pb-[2px] pl-[6px] text-[#e0e2e4]">
            Next Scene
            <Icon n="reload" />
          </span>
          <button aria-label="Scene preview" className="flex items-center gap-[8px] pl-[5px]">
            <Icon n="clap" c="text-[#69b7ff]" />
            <svg viewBox="0 0 50 50" className="size-[50px]" aria-hidden="true">
              <rect width="50" height="50" rx="2" fill="#4d4d4d" />
              <path d="M0 14.500h26v4H0zM36 26h14v4H36z" fill="#ff7b00" />
            </svg>
          </button>
        </div>
        <div className="h-[76px] border border-[#467396] bg-[#2b3544]">
          <button className="mt-px ml-[34px] flex h-6 w-[132px] items-center rounded-xs bg-[#323847] pl-[5px] text-[#b9bcc1]">
            <Icon n="clap" />
            <span className="flex-1 text-center">Open Scene</span>
          </button>
          <div className="mt-[3px] flex h-6 items-center">
            <span className="flex w-[101px] shrink-0 items-center justify-between pr-[8px] pl-[9px] text-[#8b8f95]">
              Bundled
              <Icon n="reload" />
            </span>
            <button className="h-6 flex-1 overflow-hidden rounded-xs bg-[#262a33] pl-[5px] text-left whitespace-nowrap text-[#b9bcc1]">
              Dictionary (size 5)
            </button>
          </div>
          <div className="flex h-[21px] items-center gap-[3px] bg-[#2f3742] pl-[5px] font-bold text-[#c3c6ca]">
            <Chevron dir="right" />
            Resource
            <span className="mr-[5px] ml-auto font-normal whitespace-nowrap text-[#64686f]">(1 change)</span>
          </div>
        </div>
        <Category n="area" c="text-[#8da5f3]">Area2D</Category>
        <div className="grid h-[75px] grid-rows-3">
          <Row label="Monitoring"><Toggle label="Monitoring" /></Row>
          <Row label="Monitorable"><Toggle label="Monitorable" /></Row>
          <Row label="Priority">
            <input aria-label="Priority" defaultValue="0" className="w-[74px] bg-transparent pl-[12px] outline-none" />
            <svg viewBox="0 0 8 10" className="ml-[11px] h-[10px] w-2 text-[#c4c6c8]" fill="none" stroke="currentColor" strokeWidth="1.500">
              <path d="M1 4l3-3 3 3M1 6l3 3 3-3" />
            </svg>
          </Row>
        </div>
        <div className="grid h-[77px] grid-rows-4">
          <Fold>Gravity</Fold>
          <Fold>Linear Damp</Fold>
          <Fold>Angular Damp</Fold>
          <Fold>Audio Bus</Fold>
        </div>
        <Category n="node" c="text-[#8b8f95]">CollisionObject2D</Category>
        <div className="grid h-6">
          <Row label="Disable Mode">
            <button className="pl-[5px]">Remove</button>
          </Row>
        </div>
        <div className="h-[19px]">
          <Fold open>Collision</Fold>
        </div>
        <Layers label="Layer" />
        <div className="h-1" />
        <Layers label="Mask" />
        <div className="grid h-[26px]">
          <Row label="Priority" indent>
            <input aria-label="Collision priority" defaultValue="1" className="w-[70px] bg-transparent pl-[12px] outline-none" />
          </Row>
        </div>
        <div className="h-[19px]">
          <Fold>Input</Fold>
        </div>
        <Category n="node" c="text-[#8da5f3]">Node2D</Category>
        <div className="h-[19px]">
          <Fold note="(1 change)">Transform</Fold>
        </div>
        <Category n="canvas" c="text-[#8b8f95]">CanvasItem</Category>
        <div className="grid h-[77px] grid-rows-4">
          <Fold>Visibility</Fold>
          <Fold>Ordering</Fold>
          <Fold>Texture</Fold>
          <Fold>Material</Fold>
        </div>
        <Category n="node">Node</Category>
        <div className="grid h-[77px] grid-rows-4">
          <Fold>Process</Fold>
          <Fold>Physics Interpolation</Fold>
          <Fold>Auto Translate</Fold>
          <Fold>Editor Description</Fold>
        </div>
        <div className="grid h-[25px]">
          <Row label="Script">
            <button className="flex items-center gap-[10px] pl-[5px]">
              <Icon n="gear" />
              door.gd
            </button>
          </Row>
        </div>
      </div>
    </aside>
  );
}

export default function App() {
  return (
    <div className="relative flex h-screen flex-col overflow-hidden bg-[#1d2229] font-['Noto_Sans',sans-serif] text-[11px]">
      <TopBar />
      <div className="flex min-h-0 flex-1 gap-1">
        <div className="flex w-[213px] shrink-0 flex-col gap-1">
          <SceneDock />
          <FileDock />
        </div>
        <CenterArea />
        <Inspector />
      </div>
      <svg viewBox="0 0 16 24" className="pointer-events-none absolute right-[2px] bottom-0 h-6 w-4" aria-hidden="true">
        <path d="M1 1v18l4-4 3 7 3.500-1.500L8.500 14H14z" fill="#fff" stroke="#000" strokeWidth="1.200" />
      </svg>
    </div>
  );
}
